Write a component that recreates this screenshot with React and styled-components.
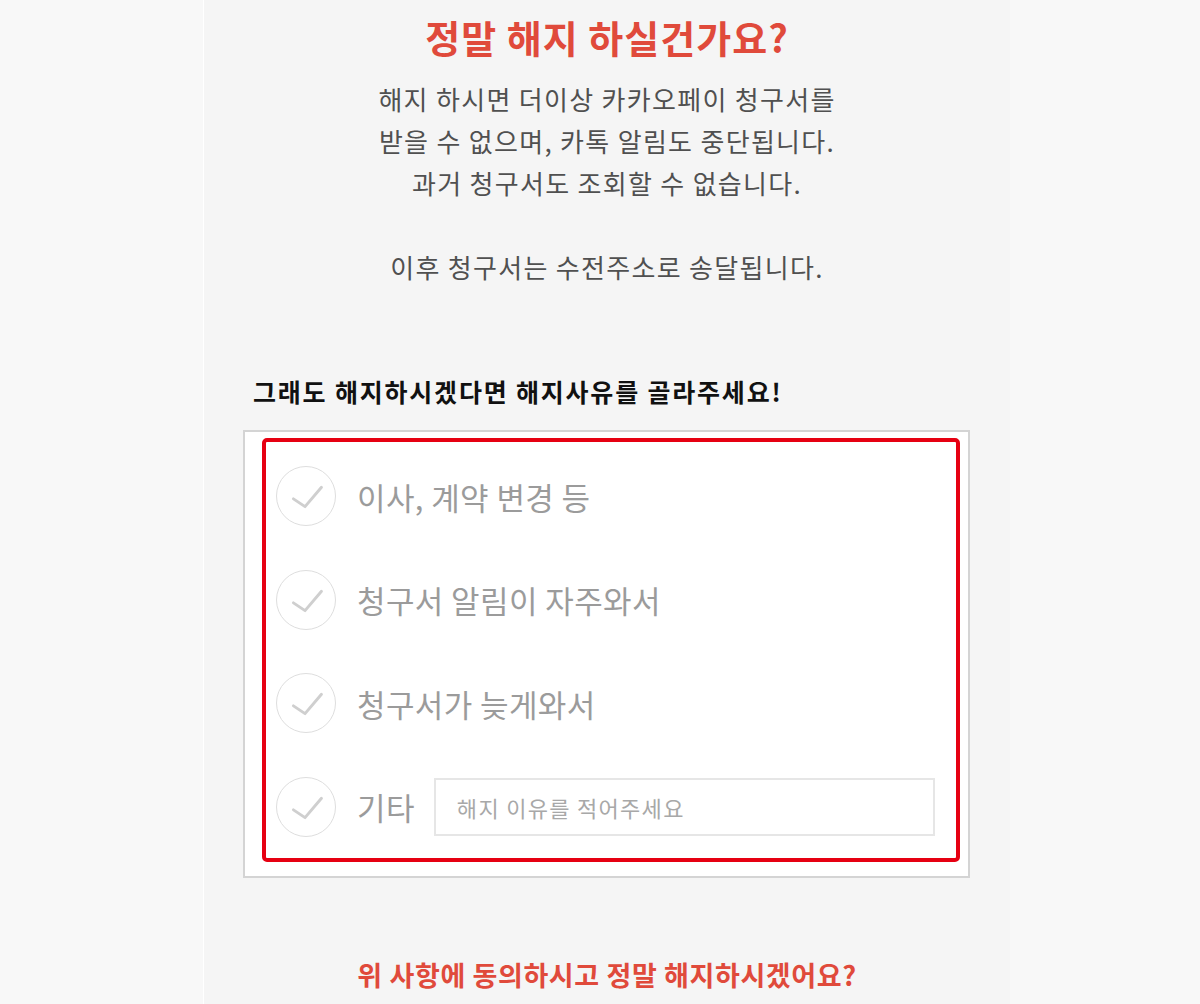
import React from 'react';
import styled, { createGlobalStyle } from 'styled-components';

const GlobalStyle = createGlobalStyle`
    body {
        margin: 0;
        font-family: "Noto Sans CJK KR", "Noto Sans", sans-serif;
        background: #f7f7f7;
    }
`;

const reasons = ['이사, 계약 변경 등', '청구서 알림이 자주와서', '청구서가 늦게와서'];

function CheckCircle() {
    return (
        <Circle>
            <svg width="60" height="60" viewBox="0 0 60 60">
                <polyline
                    points="17,33 29,41 46,21"
                    fill="none"
                    stroke="#cfcfcf"
                    strokeWidth="3"
                    strokeLinecap="round"
                    strokeLinejoin="round"
                />
            </svg>
        </Circle>
    );
}

export default function App() {
    return (
        <>
            <GlobalStyle />
            <Page>
                <Side />
                <Main>
                    <Title>정말 해지 하실건가요?</Title>
                    <Notice>
                        해지 하시면 더이상 카카오페이 청구서를<br />
                        받을 수 없으며, 카톡 알림도 중단됩니다.<br />
                        과거 청구서도 조회할 수 없습니다.<br />
                        <br />
                        이후 청구서는 수전주소로 송달됩니다.
                    </Notice>

                    <Question>그래도 해지하시겠다면 해지사유를 골라주세요!</Question>
                    <Card>
                        <ReasonList>
                            {reasons.map(r => (
                                <Reason key={r}>
                                    <CheckCircle />
                                    <Label>{r}</Label>
                                </Reason>
                            ))}
                            <Reason>
                                <CheckCircle />
                                <Label>기타</Label>
                                <ReasonInput placeholder="해지 이유를 적어주세요" />
                            </Reason>
                        </ReasonList>
                    </Card>

                    <Confirm>위 사항에 동의하시고 정말 해지하시겠어요?</Confirm>
                </Main>
                <Side />
            </Page>
        </>
    );
}

const Page = styled.div`
    display: flex;
    min-height: 1004px;
`;

const Side = styled.div`
    flex: 1;
    background: #f8f8f8;
    &:first-child {
        flex: 0 0 203px;
        border-right: 1px solid #ffffff;
    }
`;

const Main = styled.main`
    flex: 0 0 806px;
    background: #f5f5f5;
    padding: 11px 0 0 39px;
    box-sizing: border-box;
    display: flex;
    flex-direction: column;
`;

const Title = styled.h1`
    margin: 0 39px 0 0;
    text-align: center;
    font-size: 38px;
    line-height: 52px;
    letter-spacing: 1px;
    font-weight: 700;
    color: #e04a3b;
`;

const Notice = styled.p`
    margin: 15px 39px 0 0;
    text-align: center;
    font-size: 26px;
    line-height: 42px;
    letter-spacing: 1.3px;
    color: #505050;
`;

const Question = styled.h2`
    margin: 86px 0 0 10px;
    font-size: 25px;
    line-height: 34px;
    letter-spacing: 1.8px;
    font-weight: 700;
    color: #111;
`;

const Card = styled.div`
    margin-top: 22px;
    width: 727px;
    box-sizing: border-box;
    background: #fff;
    border: 2px solid #d4d4d4;
    padding: 6px 8px 14px 17px;
`;

const ReasonList = styled.div`
    border: 4px solid #e60012;
    border-radius: 5px;
    padding: 24px 21px 21px 10px;
    display: flex;
    flex-direction: column;
    gap: 43.5px;
`;

const Reason = styled.label`
    display: flex;
    align-items: center;
    height: 60px;
`;

const Circle = styled.span`
    flex: 0 0 58px;
    width: 58px;
    height: 58px;
    border: 1.5px solid #dedede;
    border-radius: 50%;
    display: flex;
    align-items: center;
    justify-content: center;
    svg {
        display: block;
    }
`;

const Label = styled.span`
    margin-left: 21px;
    font-size: 31px;
    letter-spacing: 0.4px;
    color: #9b9b9b;
    white-space: nowrap;
`;

const ReasonInput = styled.input`
    margin-left: 19px;
    flex: 1;
    height: 58px;
    box-sizing: border-box;
    border: 2px solid #e6e6e6;
    padding: 0 21px;
    font-family: "Noto Sans CJK KR", "Noto Sans", sans-serif;
    font-size: 22px;
    letter-spacing: 1.3px;
    color: #666;
    outline: none;
    &::placeholder {
        color: #a8a8a8;
    }
`;

const Confirm = styled.p`
    margin: 79px 39px 0 0;
    text-align: center;
    font-size: 27px;
    line-height: 36px;
    letter-spacing: 0.6px;
    font-weight: 700;
    color: #e04a3b;
`;
